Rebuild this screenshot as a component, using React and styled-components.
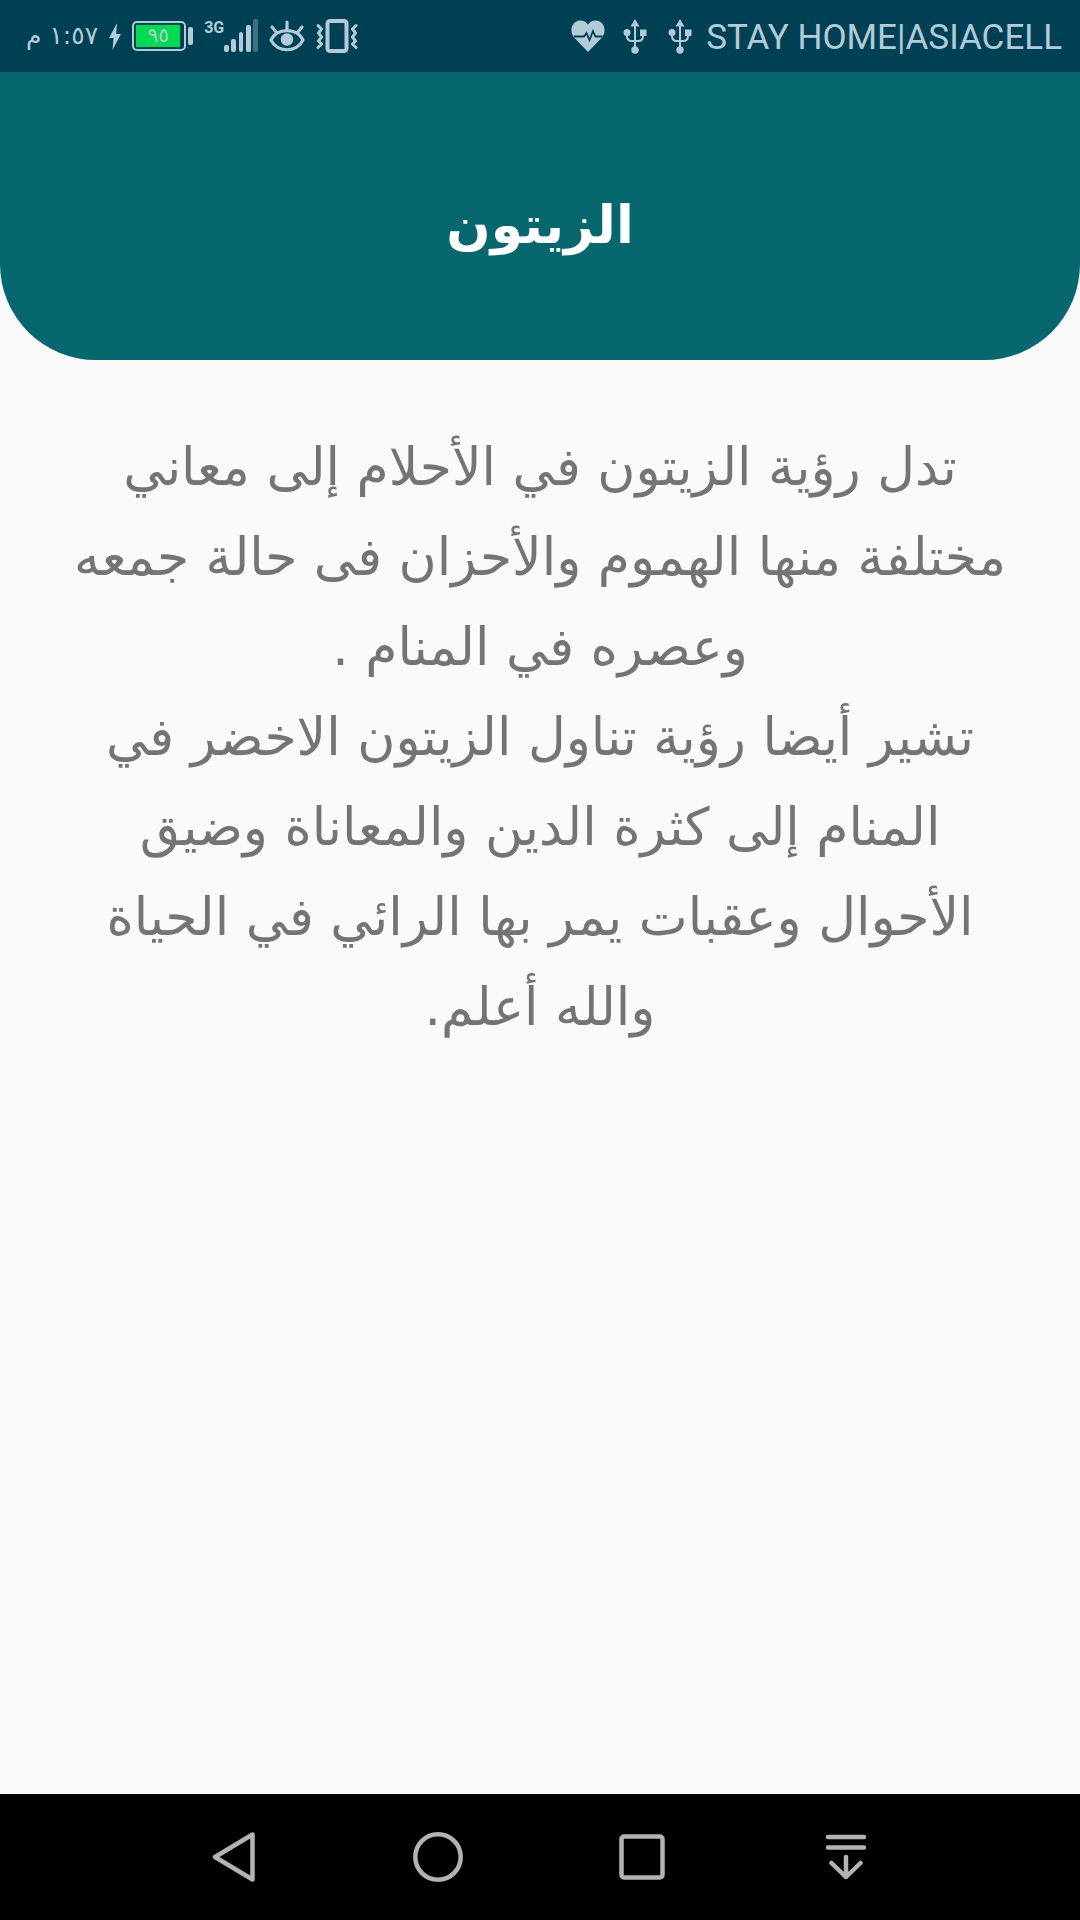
import React from 'react';
import styled, { createGlobalStyle } from 'styled-components';

const GlobalStyle = createGlobalStyle`
  :root {
    --status-blue: #004055;
    --status-ink: #b3cbd6;
    --header-teal: #06686e;
    --page-white: #fafafa;
    --text-grey: #747474;
    --nav-grey: #b3b3b3;
  }

  * {
    box-sizing: border-box;
  }

  body {
    margin: 0;
    background-color: var(--page-white);
  }
`;

const Screen = styled.div`
  display: flex;
  flex-direction: column;
  min-height: 100vh;
  font-family: 'DejaVu Sans', sans-serif;
`;

const StatusBar = styled.div`
  display: flex;
  align-items: center;
  justify-content: space-between;
  height: 72px;
  padding: 0 18px 0 26px;
  background-color: var(--status-blue);
  color: var(--status-ink);
`;

const StatusGroup = styled.div`
  display: flex;
  align-items: center;
  gap: ${props => props.$gap};

  svg {
    display: block;
  }
`;

const Clock = styled.time`
  font-size: 25px;
  line-height: 36px;
  white-space: nowrap;
`;

const Battery = styled.div`
  display: flex;
  align-items: center;
  gap: 2px;

  &::after {
    content: '';
    width: 5px;
    height: 18px;
    border-radius: 2px;
    background-color: var(--status-ink);
  }
`;

const BatteryShell = styled.div`
  width: 54px;
  height: 30px;
  padding: 2px;
  border: 2px solid var(--status-ink);
  border-radius: 5px;
`;

const BatteryLevel = styled.div`
  width: 44px;
  height: 22px;
  background-color: #00dc50;
  font-size: 20px;
  line-height: 20px;
  text-align: center;
`;

const Signal = styled.div`
  display: flex;
  align-items: flex-start;
  height: 34px;
`;

const NetworkType = styled.span`
  font-family: Roboto, sans-serif;
  font-size: 16px;
  font-weight: 700;
  line-height: 18px;
`;

const Carrier = styled.span`
  padding-top: 4px;
  font-family: Roboto, sans-serif;
  font-size: 35px;
  line-height: 42px;
  white-space: nowrap;
`;

const Header = styled.header`
  display: flex;
  align-items: center;
  justify-content: center;
  height: 288px;
  padding-top: 18px;
  border-radius: 0 0 96px 96px;
  background-color: var(--header-teal);
`;

const Title = styled.h1`
  margin: 0;
  color: #fff;
  font-size: 52px;
  font-weight: 700;
  line-height: 90px;
`;

const Content = styled.main`
  flex: 1;
  padding: 62px 24px;
`;

const Meaning = styled.p`
  margin: 0;
  color: var(--text-grey);
  font-size: 52px;
  line-height: 90px;
  text-align: center;
  white-space: pre-line;
`;

const NavBar = styled.nav`
  display: flex;
  justify-content: center;
  height: 126px;
  background-color: #000;
`;

const NavButton = styled.button`
  display: flex;
  flex: 0 1 204px;
  align-items: center;
  justify-content: center;
  padding: 0;
  border: none;
  background: none;
  color: var(--nav-grey);
  cursor: pointer;
`;

const meaningText = [
  'تدل رؤية الزيتون في الأحلام إلى معاني',
  'مختلفة منها الهموم والأحزان فى حالة جمعه',
  'وعصره في المنام .',
  'تشير أيضا رؤية تناول الزيتون الاخضر في',
  'المنام إلى كثرة الدين والمعاناة وضيق',
  'الأحوال وعقبات يمر بها الرائي في الحياة',
  'والله أعلم.',
].join('\n');

const BoltIcon = () => (
  <svg width="12" height="27" viewBox="0 0 12 27" fill="currentColor">
    <path d="M8 0 0 15h4.500L3.500 27 12 11H7.200z" />
  </svg>
);

const SignalIcon = () => (
  <svg width="34" height="34" viewBox="0 0 34 34" fill="currentColor">
    <rect x="0" y="26" width="5" height="7" rx="2" />
    <rect x="7" y="20" width="5" height="13" rx="2" />
    <rect x="15" y="13" width="4" height="20" rx="2" />
    <rect x="22" y="6" width="5" height="27" rx="2" />
    <rect x="29" y="0" width="5" height="33" rx="2" opacity="0.35" />
  </svg>
);

const EyeIcon = () => (
  <svg width="36" height="32" viewBox="0 0 36 32" fill="none" stroke="currentColor" strokeWidth="3.200" strokeLinecap="round">
    <path d="M2 20C8 7.500 28 7.500 34 20C28 33 8 33 2 20Z" strokeLinejoin="round" />
    <path d="M18 2v7M3 7l4 5M33 7l-4 5" />
    <circle cx="18" cy="19.500" r="6.200" fill="currentColor" stroke="none" />
  </svg>
);

const VibrateIcon = () => (
  <svg width="42" height="34" viewBox="0 0 42 34" fill="none" stroke="currentColor" strokeLinecap="round" strokeLinejoin="round">
    <rect x="11.500" y="2" width="19" height="30" rx="2.500" strokeWidth="4" />
    <path d="M2 6.500 5.500 10 2.500 14 5.500 18 2.500 22 5.500 25 2 28.500M40 6.500 36.500 10 39.500 14 36.500 18 39.500 22 36.500 25 40 28.500" strokeWidth="3" />
  </svg>
);

const HeartIcon = () => (
  <svg width="34" height="32" viewBox="0 0 34 32">
    <path d="M17 32 3 17.500C-1.500 12 0 3 7 .800c4-1.200 8 .400 10 3.700C19 1.200 23-.400 27 .800c7 2.200 8.500 11.200 4 16.700z" fill="currentColor" />
    <path d="M3 16.500h10l2.500-3.500 3 7 3.500-9 2.500 5.500h7" fill="none" stroke="#004055" strokeWidth="1.800" />
  </svg>
);

const UsbIcon = () => (
  <svg width="24" height="35" viewBox="0 0 24 35" fill="currentColor">
    <path d="M12 0 16.500 7.500h-9z" />
    <circle cx="12" cy="31" r="3.700" />
    <circle cx="4" cy="13.500" r="3.500" />
    <rect x="17" y="10.500" width="6.500" height="6.500" />
    <path d="M12 6v23M4 14v3q0 5 5 5h6q5 0 5-5v-3" fill="none" stroke="currentColor" strokeWidth="2" />
  </svg>
);

const BackIcon = () => (
  <svg width="44" height="52" viewBox="0 0 44 52" fill="none" stroke="currentColor" strokeWidth="4.500" strokeLinejoin="round">
    <path d="M3 26 40.500 3.500v45z" />
  </svg>
);

const HomeIcon = () => (
  <svg width="50" height="50" viewBox="0 0 50 50" fill="none" stroke="currentColor" strokeWidth="4.500">
    <circle cx="25" cy="25" r="22.700" />
  </svg>
);

const RecentsIcon = () => (
  <svg width="46" height="46" viewBox="0 0 46 46" fill="none" stroke="currentColor" strokeWidth="4.500">
    <rect x="2.500" y="2.500" width="41" height="41" rx="2.500" />
  </svg>
);

const PanelIcon = () => (
  <svg width="42" height="46" viewBox="0 0 42 46" fill="none" stroke="currentColor" strokeWidth="4.500" strokeLinecap="round" strokeLinejoin="round">
    <path d="M3 3h36M3 13.500h36M21 23v20M6.500 29 21 43l14.500-14" />
  </svg>
);

const navItems = [
  { label: 'Back', Icon: BackIcon },
  { label: 'Home', Icon: HomeIcon },
  { label: 'Recent apps', Icon: RecentsIcon },
  { label: 'Notification panel', Icon: PanelIcon },
];

const App = () => {
  return (
    <Screen>
      <GlobalStyle />
      <StatusBar>
        <StatusGroup $gap="11px">
          <Clock dir="rtl">١:٥٧ م</Clock>
          <BoltIcon />
          <Battery>
            <BatteryShell>
              <BatteryLevel>٩٥</BatteryLevel>
            </BatteryShell>
          </Battery>
          <Signal>
            <NetworkType>3G</NetworkType>
            <SignalIcon />
          </Signal>
          <EyeIcon />
          <VibrateIcon />
        </StatusGroup>
        <StatusGroup $gap="14px">
          <StatusGroup $gap="18px">
            <HeartIcon />
            <StatusGroup $gap="21px">
              <UsbIcon />
              <UsbIcon />
            </StatusGroup>
          </StatusGroup>
          <Carrier>STAY HOME|ASIACELL</Carrier>
        </StatusGroup>
      </StatusBar>

      <Header>
        <Title dir="rtl" lang="ar">الزيتون</Title>
      </Header>

      <Content>
        <Meaning dir="rtl" lang="ar">{meaningText}</Meaning>
      </Content>

      <NavBar>
        {navItems.map(({ label, Icon }) => (
          <NavButton key={label} type="button" aria-label={label}>
            <Icon />
          </NavButton>
        ))}
      </NavBar>
    </Screen>
  );
};

export default App;
